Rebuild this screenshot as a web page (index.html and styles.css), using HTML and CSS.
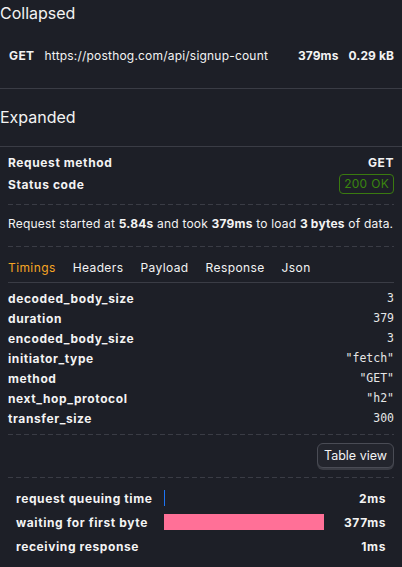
FILE: index.html
```html
<!DOCTYPE html>
<html>
<head>
<meta charset="utf-8">
<link rel="stylesheet" href="styles.css">
</head>
<body>
  <h2 class="heading heading-first">Collapsed</h2>
  <div class="collapsed-row">
    <span class="method">GET</span>
    <span class="url">https://posthog.com/api/signup-count</span>
    <span class="stat">379ms</span>
    <span class="stat">0.29 kB</span>
  </div>

  <h2 class="heading heading-second">Expanded</h2>
  <div class="expanded">
    <div class="kv">
      <span class="label">Request method</span>
      <span class="label">GET</span>
    </div>
    <div class="kv">
      <span class="label">Status code</span>
      <span class="badge">200 OK</span>
    </div>
    <div class="dash"></div>
    <p class="summary">Request started at <b>5.84s</b> and took <b>379ms</b> to load <b>3 bytes</b> of data.</p>
    <div class="dash"></div>

    <div class="tabs">
      <span class="tab active">Timings</span>
      <span class="tab">Headers</span>
      <span class="tab">Payload</span>
      <span class="tab">Response</span>
      <span class="tab">Json</span>
    </div>

    <div class="props">
      <div class="prop"><span class="label">decoded_body_size</span><span class="val">3</span></div>
      <div class="prop"><span class="label">duration</span><span class="val">379</span></div>
      <div class="prop"><span class="label">encoded_body_size</span><span class="val">3</span></div>
      <div class="prop"><span class="label">initiator_type</span><span class="val">"fetch"</span></div>
      <div class="prop"><span class="label">method</span><span class="val">"GET"</span></div>
      <div class="prop"><span class="label">next_hop_protocol</span><span class="val">"h2"</span></div>
      <div class="prop"><span class="label">transfer_size</span><span class="val">300</span></div>
    </div>
    <div class="dash dash-props"></div>
    <div class="btn-row">
      <button class="btn">Table view</button>
    </div>
    <div class="dash"></div>

    <div class="timings">
      <div class="timing">
        <span class="label">request queuing time</span>
        <div class="track"><div class="bar bar-queue" style="margin-left:0px;width:1px"></div></div>
        <span class="label tval">2ms</span>
      </div>
      <div class="timing">
        <span class="label">waiting for first byte</span>
        <div class="track"><div class="bar bar-wait" style="margin-left:0px;width:160px"></div></div>
        <span class="label tval">377ms</span>
      </div>
      <div class="timing">
        <span class="label">receiving response</span>
        <div class="track"><div class="bar bar-recv" style="margin-left:160px;width:1px"></div></div>
        <span class="label tval">1ms</span>
      </div>
    </div>
  </div>
</body>
</html>
```

FILE: styles.css
```css
* { box-sizing: border-box; }
html, body {
  margin: 0;
  padding: 0;
  background: #1d1f27;
  color: #f3f3f3;
  font-family: Inter, "Noto Sans", sans-serif;
  font-size: 12px;
  letter-spacing: 0.2px;
}
.heading {
  margin: 0;
  font-size: 16px;
  font-weight: 400;
  line-height: 26px;
  letter-spacing: 0;
}
.heading-second {
  margin-top: 15px;
  border-bottom: 1px solid #3a3c45;
  padding-bottom: 16px;
}
.collapsed-row {
  display: flex;
  align-items: center;
  padding: 21px 8px 23px 9px;
  line-height: 18px;
  border-bottom: 1px solid #3a3c45;
}
.method {
  font-weight: 700;
  letter-spacing: 0.4px;
  margin-right: 10px;
}
.url { flex: 1; }
.stat {
  font-weight: 700;
  margin-left: 10px;
  letter-spacing: 0.1px;
}
.expanded {
  padding: 4px 8px 0 8px;
}
.kv {
  display: flex;
  justify-content: space-between;
  align-items: center;
  height: 22px;
}
.label {
  font-weight: 700;
  letter-spacing: 0.6px;
}
.badge {
  border: 1px solid #3a7a10;
  color: #3a850f;
  border-radius: 4px;
  padding: 0 4px;
  line-height: 18px;
  letter-spacing: 0.3px;
}
.dash {
  height: 1px;
  background: repeating-linear-gradient(to right, #3a3c45 0 5px, transparent 5px 8px);
}
.kv + .dash { margin-top: 9px; }
.summary {
  margin: 0;
  padding: 10px 0 13px;
  line-height: 18px;
}
.summary b { font-weight: 700; }
.tabs {
  display: flex;
  gap: 17px;
  padding: 12px 0 5px;
  line-height: 18px;
  border-bottom: 1px solid #3a3c45;
  letter-spacing: 0.4px;
}
.tab.active { color: #f5a524; }
.props { padding-top: 5px; }
.prop {
  display: flex;
  justify-content: space-between;
  align-items: center;
  height: 20px;
}
.val {
  font-family: "DejaVu Sans Mono", monospace;
  font-size: 11.5px;
  letter-spacing: 0;
  color: #e6e6e6;
}
.dash-props { margin-top: 6px; }
.btn-row {
  display: flex;
  justify-content: flex-end;
  padding: 8px 0 9px;
}
.btn {
  font-family: Inter, sans-serif;
  font-size: 12.5px;
  letter-spacing: 0;
  color: #f3f3f3;
  background: #23252d;
  border: 1px solid #4a4c55;
  border-radius: 6px;
  box-shadow: 0 2px 0 #3a3c44;
  height: 25px;
  padding: 0 6px;
}
.timings { padding: 8px 8px 0; }
.timing {
  display: grid;
  grid-template-columns: 148px 160px 1fr;
  align-items: center;
  height: 24px;
}
.track {
  display: flex;
  height: 16px;
}
.bar { height: 16px; }
.bar-queue { background: #1d74f5; }
.bar-wait { background: #ff7097; }
.bar-recv { background: #2d3870; }
.tval { text-align: right; }
```
